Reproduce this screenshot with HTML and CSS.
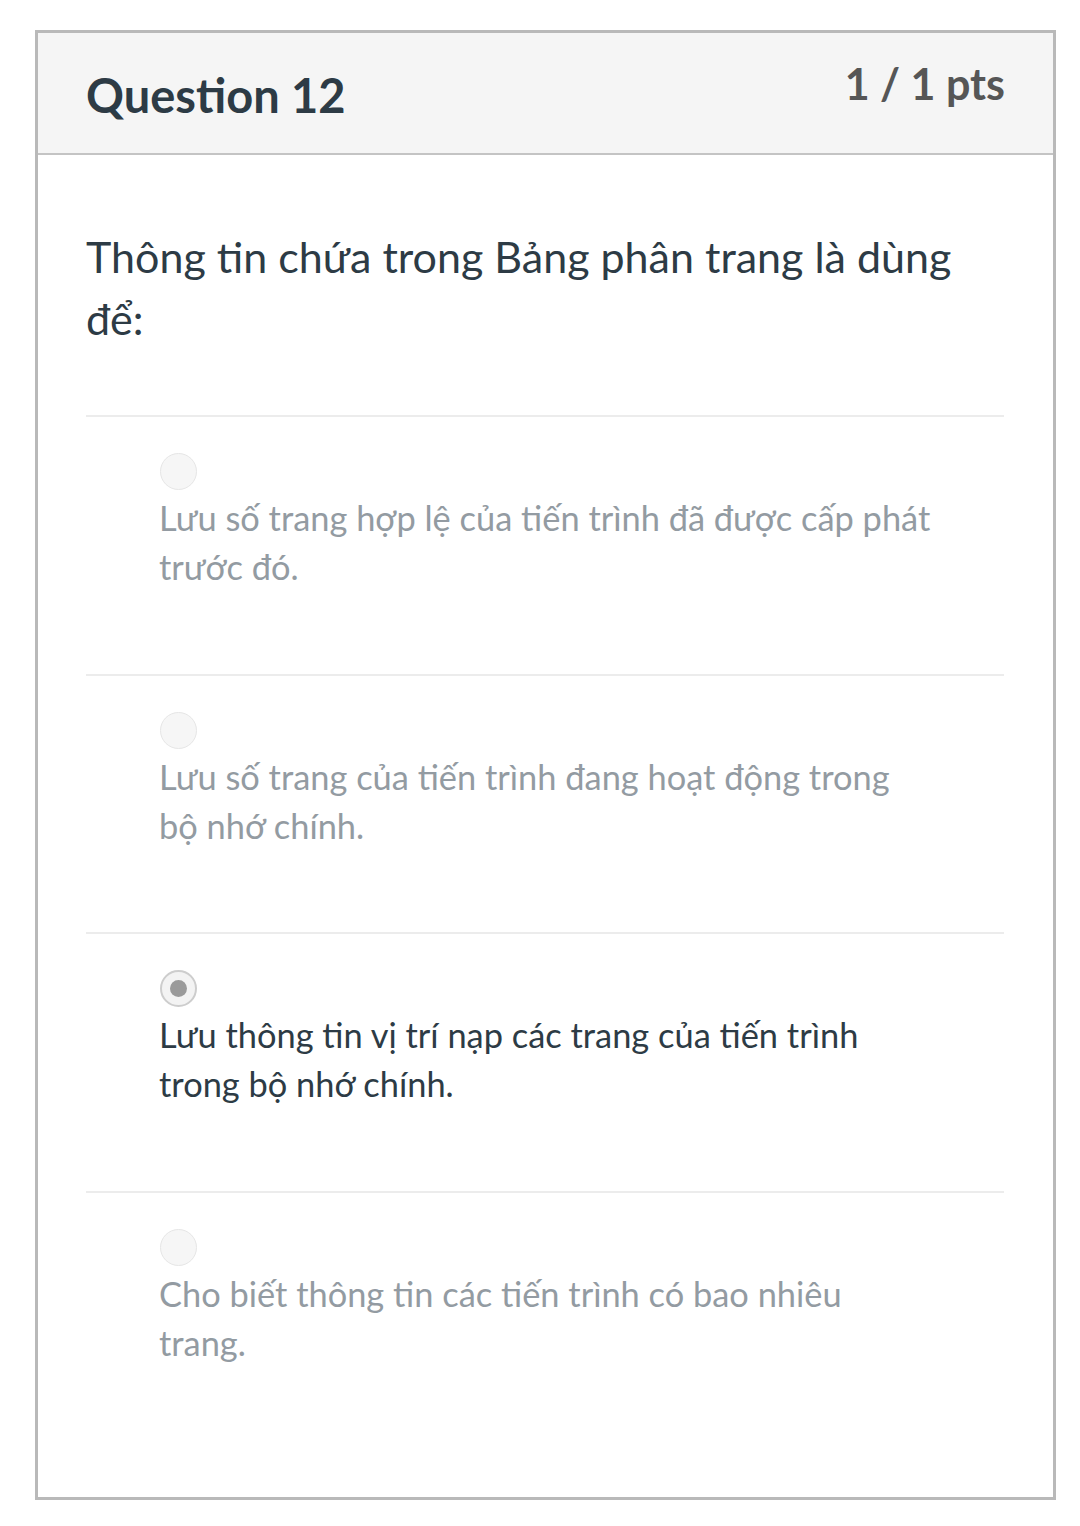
FILE: index.html
```html
<!DOCTYPE html>
<html lang="vi">
<head>
<meta charset="utf-8">
<title>Question 12</title>
<link rel="stylesheet" href="styles.css">
</head>
<body>
<div class="card">
  <div class="card-header">
    <h2 class="title">Question 12</h2>
    <div class="pts">1 / 1 pts</div>
  </div>
  <div class="card-body">
    <p class="question">Thông tin chứa trong Bảng phân trang là dùng để:</p>
    <div class="answer">
      <span class="radio"></span>
      <p class="answer-text">Lưu số trang hợp lệ của tiến trình đã được cấp phát trước đó.</p>
    </div>
    <div class="answer">
      <span class="radio"></span>
      <p class="answer-text">Lưu số trang của tiến trình đang hoạt động trong bộ nhớ chính.</p>
    </div>
    <div class="answer selected">
      <span class="radio"></span>
      <p class="answer-text">Lưu thông tin vị trí nạp các trang của tiến trình trong bộ nhớ chính.</p>
    </div>
    <div class="answer">
      <span class="radio"></span>
      <p class="answer-text">Cho biết thông tin các tiến trình có bao nhiêu trang.</p>
    </div>
  </div>
</div>
</body>
</html>
```
FILE: styles.css
```css
html, body {
  margin: 0;
  padding: 0;
  background: #ffffff;
}
body {
  font-family: Lato, "Open Sans", "Liberation Sans", sans-serif;
  color: #2d3b45;
}
.card {
  box-sizing: border-box;
  width: 1021px;
  margin: 30px 0 0 35px;
  border: 3px solid #b9b9b9;
}
.card-header {
  height: 120px;
  background: #f5f5f5;
  border-bottom: 2px solid #c4c4c4;
  display: flex;
  justify-content: space-between;
  align-items: flex-start;
  padding: 0 48px 0 48px;
}
.title {
  margin: 39px 0 0;
  font-size: 47px;
  line-height: 46px;
  font-weight: 700;
  color: #2d3b45;
}
.pts {
  margin-top: 29px;
  font-size: 43px;
  line-height: 44px;
  font-weight: 700;
  color: #565656;
}
.card-body {
  padding: 71px 49px 48px 48px;
}
.question {
  margin: 0 0 65px;
  font-size: 43px;
  line-height: 62px;
  color: #2d3b45;
  padding-right: 0;
}
.answer {
  border-top: 2px solid #ececec;
  padding: 36px 72px 82px 73px;
  height: 138.5px;
}
.radio {
  display: block;
  box-sizing: border-box;
  width: 37px;
  height: 37px;
  margin-left: 1px;
  border-radius: 50%;
  background: #f6f6f6;
  border: 1.5px solid #e6e6e6;
  position: relative;
}
.answer-text {
  margin: 3px 0 0;
  font-size: 34.4px;
  line-height: 49px;
  color: #939ba2;
}
.selected .radio {
  border: 2px solid #cdcdcd;
  background: #f3f3f3;
}
.selected .radio::after {
  content: "";
  position: absolute;
  left: 50%;
  top: 50%;
  width: 17px;
  height: 17px;
  margin: -8.5px 0 0 -8.5px;
  border-radius: 50%;
  background: #9a9a9a;
}
.selected .answer-text {
  color: #2d3b45;
}
```
